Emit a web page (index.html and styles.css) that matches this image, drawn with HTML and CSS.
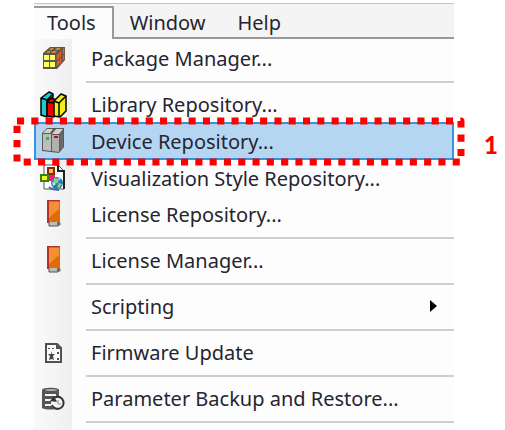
FILE: index.html
```html
<!DOCTYPE html>
<html lang="en">
<head>
  <meta charset="UTF-8">
  <meta name="viewport" content="width=device-width, initial-scale=1.0">
  <title>Tools Menu</title>
  <link rel="stylesheet" href="styles.css">
</head>
<body>
  <div class="window">

    <!-- Menu bar -->
    <nav class="menubar">
      <button class="tab active">Tools</button>
      <button class="tab">Window</button>
      <button class="tab">Help</button>
    </nav>

    <!-- Open Tools menu -->
    <ul class="menu">
      <li>
        <button class="item">
          <svg class="icon" viewBox="0 0 28 28">
            <path d="M4 9l7-6h15v13l-8 9H4z" fill="#5a5650"/>
            <path d="M7 9l2-2h3l-2 2zM12 9l2-2h4l-2 2zM10 6l2-2h3l-2 2zM16 6l2-2h4l-2 2z" fill="#e08a20"/>
            <path d="M18 11l2-2v5l-2 2zM21 8l1-1v5l-1 1zM24 5l1-1v5l-1 1zM18 18l2-2v4l-2 2zM21 15l1-1v4l-1 2zM24 12l1-1v4l-1 1z" fill="#e8602c" stroke="#e8602c" stroke-width=".5"/>
            <path d="M5 11h5v5H5zM11 11h5v5h-5zM5 18h5v5H5zM11 18h5v5h-5z" fill="#ffff62"/>
          </svg>
          <span class="label">Package Manager...</span>
        </button>
      </li>
      <li class="separator"></li>
      <li>
        <button class="item">
          <svg class="icon" viewBox="0 0 28 28" stroke="#000" stroke-width="1.5" stroke-linejoin="round">
            <path d="M2 8l8-6 4 2v3L8 11v16l-6-2z" fill="#20c8d0"/>
            <path d="M2 8l6 2 5-5" fill="none"/>
            <path d="M8 11l5-3 4 2v16l-3 1-6-1z" fill="#f00000"/>
            <path d="M8 12l6 1 3-2" fill="none"/>
            <path d="M15 11l7-7 5 2v15l-6 6-6-1z" fill="#f4ee18"/>
            <path d="M15 11l5 2v13M20 13l7-7" fill="none"/>
          </svg>
          <span class="label">Library Repository...</span>
        </button>
      </li>
      <li class="selected">
        <button class="item">
          <svg class="icon" viewBox="0 0 28 28">
            <path d="M3 6l5-5h17v19l-5 6-17-2z" fill="#5a5a5a"/>
            <path d="M4 7h8v17l-8-1z" fill="#bdbdbd"/>
            <path d="M13 8h7v17l-7-1z" fill="#b0b0b0"/>
            <path d="M4 6l4-4h6l-3 4zM13 7l4-5h7l-4 5z" fill="#d2d2d2"/>
            <path d="M21 8l3-4v16l-3 4z" fill="#6a6a6a"/>
            <path d="M7 10h3v3H7z" fill="#16c62a"/>
            <path d="M15 9h4v2h-4z" fill="#a61a2a"/>
          </svg>
          <span class="label">Device Repository...</span>
        </button>
        <svg class="marker"><rect x="7" y="8"/></svg>
        <span class="step">1</span>
      </li>
      <li>
        <button class="item">
          <svg class="icon" viewBox="0 0 28 28">
            <path d="M5 1h14l6 6v18H5z" fill="#fff" stroke="#555"/>
            <path d="M19 1v6h6v18" fill="none" stroke="#222" stroke-width="2"/>
            <path d="M9 11h7v6H9z" fill="#f0206c"/>
            <path d="M9 4h6v6H9z" fill="#ffb84a" stroke="#8c2410" stroke-width="2"/>
            <path d="M2 11h7v6H2z" fill="#ecff18" stroke="#427b18" stroke-width="2"/>
            <circle cx="18" cy="19" r="6" fill="#2879b9"/>
            <path d="M15 14l5 1-1 4-5 1zM20 19l3 1-3 4-2-1z" fill="#8dcc8d"/>
            <path d="M13 18l4 2-3 2zM19 13l3 2-2 1z" fill="#c8e8ff"/>
            <path d="M10 23l3 2 7 1" fill="none" stroke="#356f9c" stroke-width="2"/>
          </svg>
          <span class="label">Visualization Style Repository...</span>
        </button>
      </li>
      <li>
        <button class="item">
          <svg class="icon" viewBox="0 0 28 28">
            <path d="M8 0h13v23H8z" fill="#e06a08"/>
            <path d="M10 2h10v7l-10 9z" fill="#f39034"/>
            <path d="M8 0h13v1H8zM8 0h2v23H8z" fill="#b3312a"/>
            <path d="M10 22h9v4h-9z" fill="#bcbcbc"/>
            <path d="M10 22v4h9v-4M19 23h2v2h-2z" fill="none" stroke="#555"/>
          </svg>
          <span class="label">License Repository...</span>
        </button>
      </li>
      <li class="separator"></li>
      <li>
        <button class="item">
          <svg class="icon" viewBox="0 0 28 28">
            <path d="M8 0h13v23H8z" fill="#e06a08"/>
            <path d="M10 2h10v7l-10 9z" fill="#f39034"/>
            <path d="M8 0h13v1H8zM8 0h2v23H8z" fill="#b3312a"/>
            <path d="M10 22h9v4h-9z" fill="#bcbcbc"/>
            <path d="M10 22v4h9v-4M19 23h2v2h-2z" fill="none" stroke="#555"/>
          </svg>
          <span class="label">License Manager...</span>
        </button>
      </li>
      <li class="separator"></li>
      <li>
        <button class="item">
          <span class="icon"></span>
          <span class="label">Scripting</span>
          <svg class="arrow" viewBox="0 0 8 14"><path d="M0 1l7 6-7 6z"/></svg>
        </button>
      </li>
      <li class="separator"></li>
      <li>
        <button class="item">
          <svg class="icon" viewBox="0 0 28 28">
            <path d="M7 6h11l4 4v14H7z" fill="#fafafa" stroke="#505050" stroke-width="2"/>
            <path d="M17 6v5h5z" fill="#505050"/>
            <path d="M9 10h2v1H9zM13 10h2v1h-2zM18 14h2v2h-2zM18 20h2v2h-2z" fill="#505050"/>
            <path d="M12 13l1 3h3l-2 2 1 4-2-1-3 1 1-4-2-2h3z" fill="#444"/>
          </svg>
          <span class="label">Firmware Update</span>
        </button>
      </li>
      <li class="separator"></li>
      <li>
        <button class="item">
          <svg class="icon" viewBox="0 0 28 28">
            <path d="M3 6c0-3 17-3 17 0v18c-3 2-14 2-17 0z" fill="#555"/>
            <ellipse cx="12" cy="6" rx="6" ry="1" fill="#aaa"/>
            <path d="M6 11h11M6 16h8M6 21h8" stroke="#f4f4f4" stroke-width="2"/>
            <circle cx="19" cy="19" r="7" fill="#f4f4f4"/>
            <path d="M14 15a6 6 0 1 1-1 6" fill="none" stroke="#333" stroke-width="2"/>
            <path d="M11 17l4-5 3 6z" fill="#333"/>
            <path d="M19 16v4h3" fill="none" stroke="#888"/>
          </svg>
          <span class="label">Parameter Backup and Restore...</span>
        </button>
      </li>
      <li class="separator"></li>
    </ul>

  </div>
</body>
</html>
```
FILE: styles.css
```css
* {
  box-sizing: border-box;
}
body {
  margin: 0;
  background: white;
  color: #252530;
  font-family: "Noto Sans", "Open Sans", sans-serif;
  font-size: 20px;
}
button {
  padding: 0;
  border: none;
  background: none;
  color: inherit;
  font: inherit;
}
.window {
  display: flex;
  flex-direction: column;
  min-height: 100vh;
  padding: 3px 51px 0 34px;
}

/* Menu bar */
.menubar {
  display: flex;
  padding-top: 2px;
  border-top: 1px solid #c4c4c4;
  background: #f4f4f4;
}
.tab {
  height: 33px;
  padding: 2px 16px 0;
  border-bottom: 2px solid #999;
}
.tab:last-child {
  flex: 1;
  text-align: left;
}
.tab.active {
  padding: 0 16px 2px 13px;
  border-top: 2px solid #999;
  border-right: 2px solid #999;
  border-bottom: none;
  background: #fcfcfc;
}

/* Drop-down menu */
.menu {
  flex: 1;
  margin: 0;
  padding: 1px 0 0;
  list-style: none;
  background: linear-gradient(90deg, #fafafa, #efefef) left / 38px 100% no-repeat #fdfdfd;
}
.item {
  display: flex;
  align-items: center;
  width: 100%;
  height: 36px;
  text-align: left;
}
.icon {
  flex: none;
  width: 28px;
  height: 28px;
  margin: 0 5px;
}
.label {
  flex: 1;
  padding-left: 19px;
  white-space: nowrap;
}
.arrow {
  width: 8px;
  height: 14px;
  margin-right: 16px;
}
.separator {
  height: 10px;
  margin-left: 52px;
  padding-top: 5px;
}
.separator::before {
  content: "";
  display: block;
  height: 2px;
  background: #cecece;
}

/* Highlighted item with its callout */
.selected {
  position: relative;
}
.selected .item {
  height: 38px;
  background: #b5d6f2;
  box-shadow: inset 0 0 0 2px #3893de;
}
.marker {
  position: absolute;
  top: -9px;
  left: -24px;
  width: calc(100% + 38px);
  height: 56px;
  pointer-events: none;
}
.marker rect {
  width: calc(100% - 14px);
  height: 41px;
  fill: none;
  stroke: #fe0000;
  stroke-width: 7px;
  stroke-dasharray: 7.1 7.2;
  stroke-linejoin: round;
}
.step {
  position: absolute;
  top: 8px;
  left: calc(100% + 30px);
  color: #fe0000;
  font: 900 24px/30px Lato, sans-serif;
}
```
